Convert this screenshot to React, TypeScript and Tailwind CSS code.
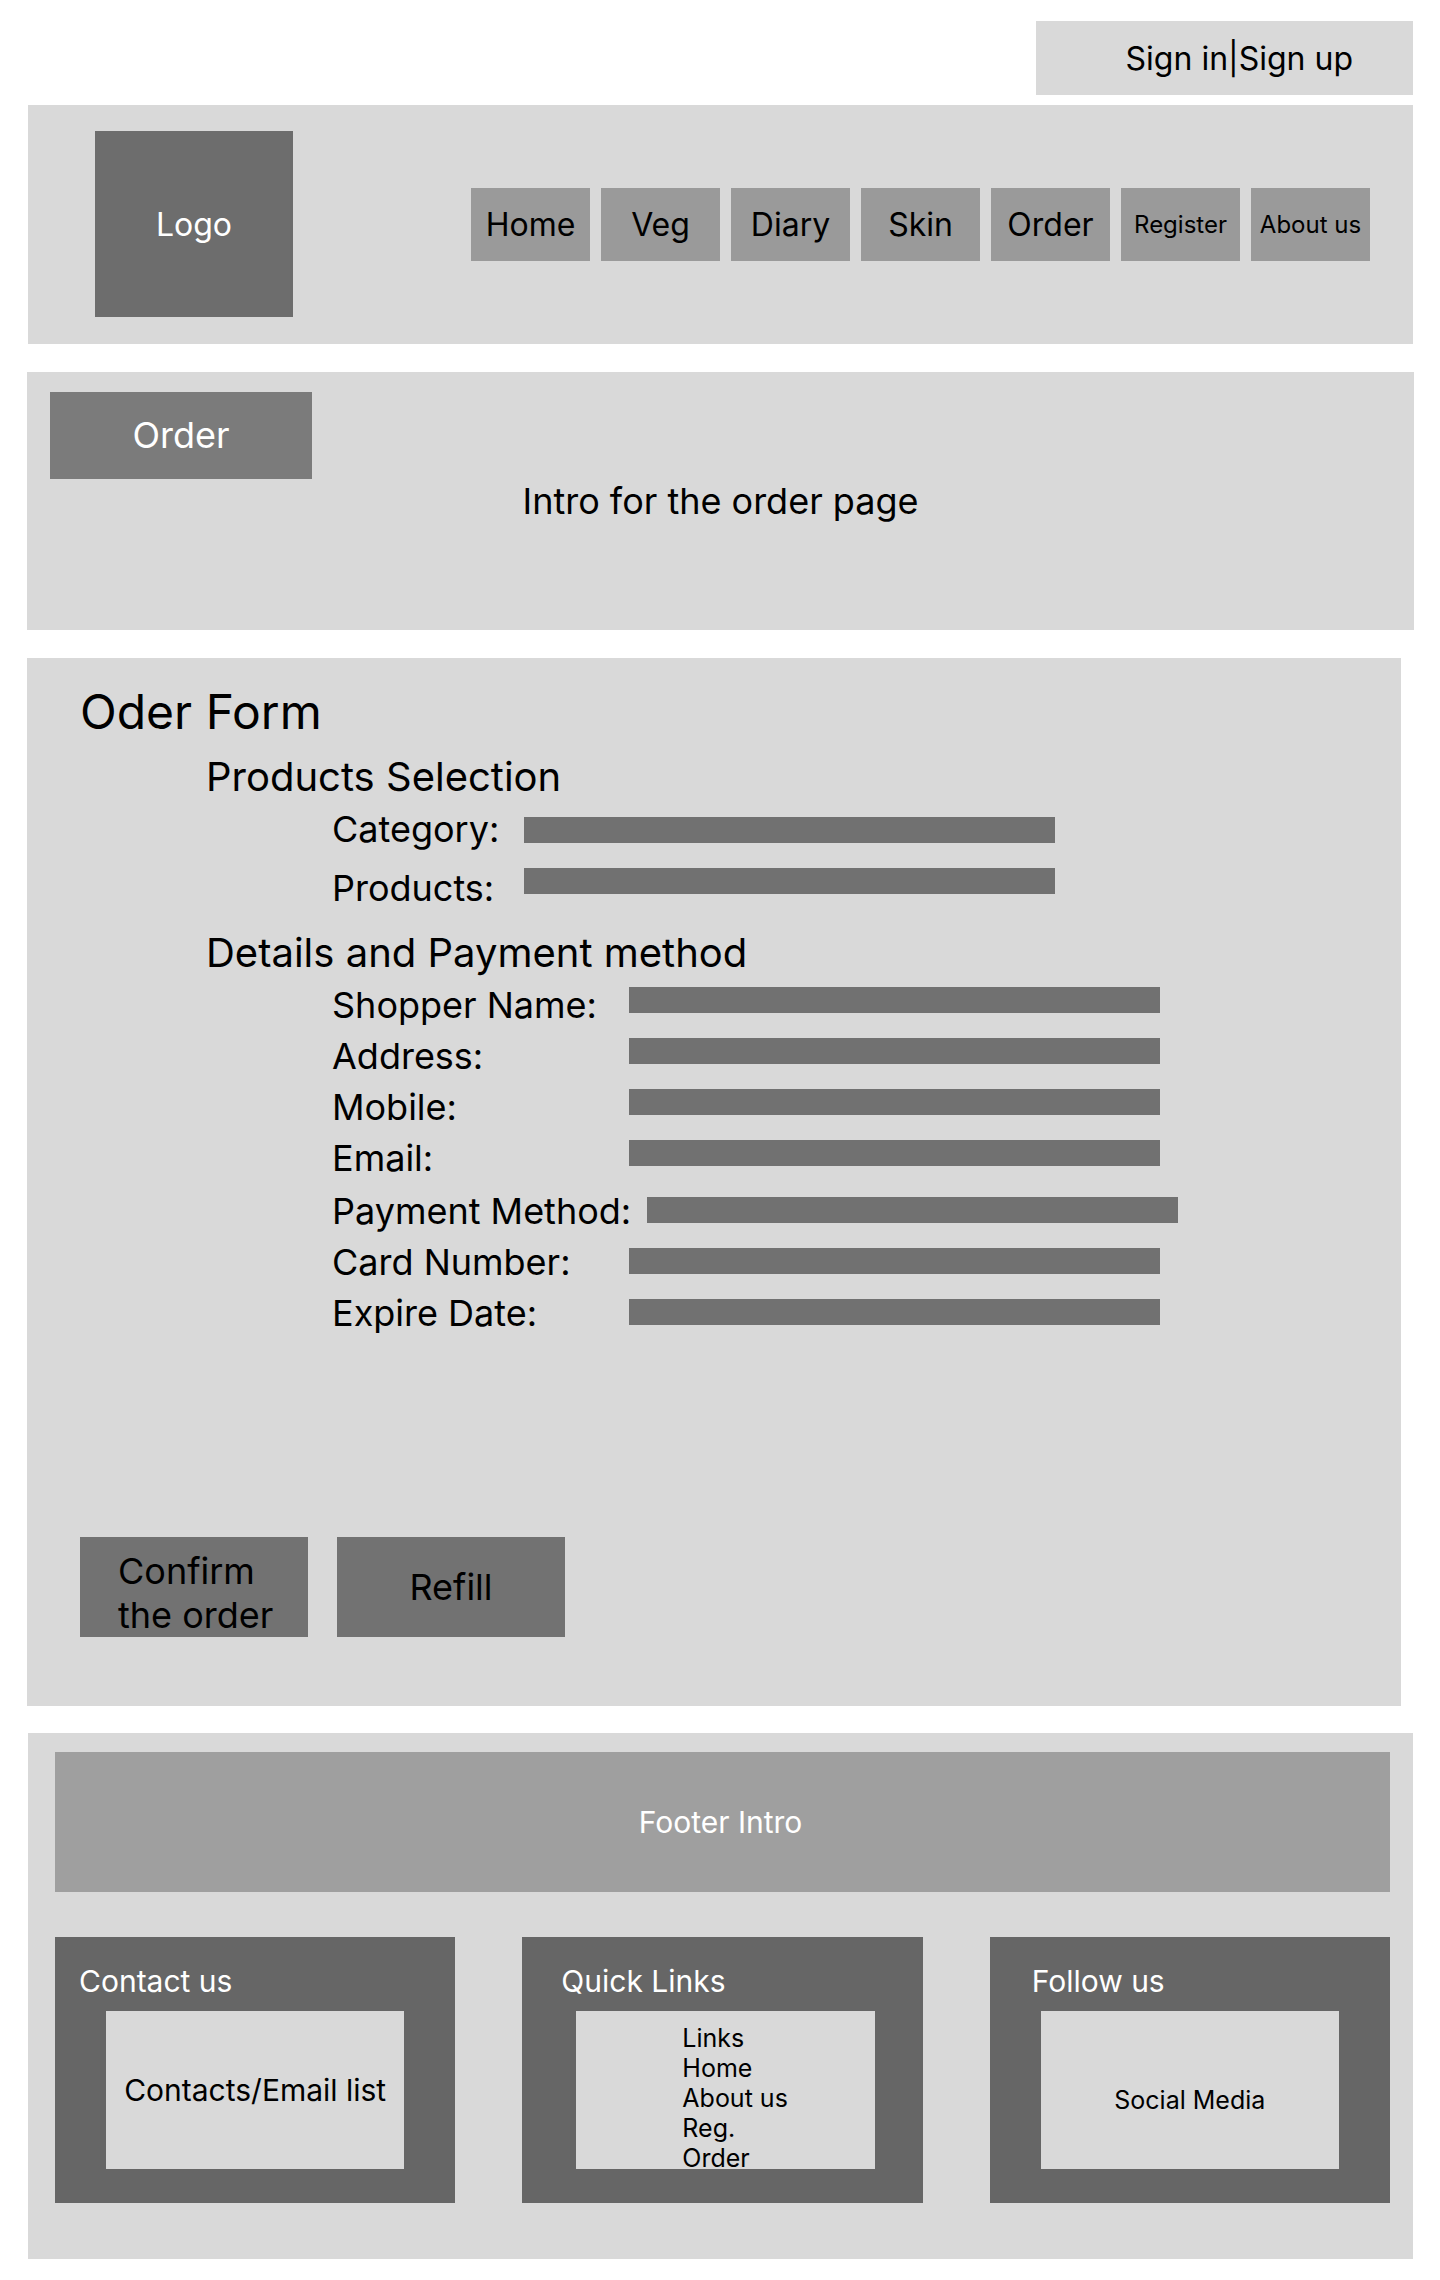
import type { ReactNode } from "react";

type Field = { id: string; label: string; type?: string };

const navItems = [
  { label: "Home", size: "text-[32px] leading-[39px]" },
  { label: "Veg", size: "text-[32px] leading-[39px]" },
  { label: "Diary", size: "text-[32px] leading-[39px]" },
  { label: "Skin", size: "text-[32px] leading-[39px]" },
  { label: "Order", size: "text-[32px] leading-[39px]" },
  { label: "Register", size: "text-[24px] leading-[29px]" },
  { label: "About us", size: "text-[24px] leading-[29px]" },
];

const productFields: Field[] = [
  { id: "category", label: "Category:" },
  { id: "products", label: "Products:" },
];

const shopperFields: Field[] = [
  { id: "shopper-name", label: "Shopper Name:" },
  { id: "address", label: "Address:" },
  { id: "mobile", label: "Mobile:", type: "tel" },
  { id: "email", label: "Email:", type: "email" },
];

const paymentFields: Field[] = [
  { id: "payment-method", label: "Payment Method:" },
  { id: "card-number", label: "Card Number:" },
  { id: "expire-date", label: "Expire Date:" },
];

const quickLinks = ["Links", "Home", "About us", "Reg.", "Order"];

function FieldInput({ id, type = "text" }: { id: string; type?: string }) {
  return (
    <input
      id={id}
      name={id}
      type={type}
      className="block h-[26px] w-[531px] min-w-0 bg-[#717171] px-2 text-base text-white"
    />
  );
}

function FieldRow({ field, inputClass }: { field: Field; inputClass: string }) {
  return (
    <div className="flex items-start gap-4">
      <label htmlFor={field.id} className="min-w-[281px] whitespace-nowrap text-4xl leading-[51px]">
        {field.label}
      </label>
      <div className={inputClass}>
        <FieldInput id={field.id} type={field.type} />
      </div>
    </div>
  );
}

function FooterCard({
  title,
  titleClass,
  bodyClass,
  children,
}: {
  title: string;
  titleClass: string;
  bodyClass: string;
  children: ReactNode;
}) {
  return (
    <section className="bg-[#666666] pt-[26px] pb-[34px] text-white">
      <h2 className={`text-[30px] leading-9 ${titleClass}`}>{title}</h2>
      <div className={`mt-3 flex h-[158px] bg-[#d9d9d9] text-black ${bodyClass}`}>{children}</div>
    </section>
  );
}

export default function App() {
  return (
    <div className="bg-white pt-[21px] pb-[21px] font-['Inter',sans-serif] text-black">
      <div className="mr-[27px] ml-auto flex h-[74px] w-[377px] items-center justify-end bg-[#d9d9d9] pr-[60px] text-[32px] leading-[39px]">
        <a href="#sign-in">Sign in</a>
        <span>|</span>
        <a href="#sign-up">Sign up</a>
      </div>

      <header className="mt-2.5 mr-[27px] ml-7 flex items-center justify-between bg-[#d9d9d9] pt-[26px] pr-[43px] pb-[27px] pl-[67px]">
        <a
          href="#home"
          className="flex h-[186px] w-[198px] items-center justify-center bg-[#6d6d6d] text-[32px] leading-[39px] text-white"
        >
          Logo
        </a>
        <nav className="flex gap-[11px]">
          {navItems.map((item) => (
            <a
              key={item.label}
              href="#"
              className={`flex h-[73px] w-[119px] items-center justify-center whitespace-nowrap bg-[#9a9a9a] ${item.size}`}
            >
              {item.label}
            </a>
          ))}
        </nav>
      </header>

      <main>
        <section className="mt-7 mr-[26px] ml-[27px] bg-[#d9d9d9] px-[23px] pt-5 pb-[107px]">
          <h1 className="flex h-[87px] w-[262px] items-center justify-center bg-[#7b7b7b] pb-0.5 text-4xl leading-[44px] text-white">
            Order
          </h1>
          <p className="text-center text-4xl leading-[44px]">Intro for the order page</p>
        </section>

        <form className="mt-7 mr-[39px] ml-[27px] bg-[#d9d9d9] pt-[25px] pb-[69px] pl-[53px]">
          <h2 className="text-5xl leading-[58px]">Oder Form</h2>

          <fieldset className="mt-3 pl-[126px]">
            <legend className="text-[40px] leading-[48px]">Products Selection</legend>
            <div className="mt-1.5 flex gap-4 pl-[126px]">
              <div className="flex min-w-[176px] flex-col gap-[15px]">
                {productFields.map((field) => (
                  <label key={field.id} htmlFor={field.id} className="text-4xl leading-[44px]">
                    {field.label}
                  </label>
                ))}
              </div>
              <div className="flex flex-col gap-[25px] pt-2.5">
                {productFields.map((field) => (
                  <FieldInput key={field.id} id={field.id} />
                ))}
              </div>
            </div>
          </fieldset>

          <fieldset className="mt-[19px] pl-[126px]">
            <legend className="text-[40px] leading-[48px]">Details and Payment method</legend>
            <div className="mt-[3px] flex flex-col gap-0.5 pl-[126px]">
              <div>
                {shopperFields.map((field) => (
                  <FieldRow key={field.id} field={field} inputClass="pt-[7px]" />
                ))}
              </div>
              <div>
                {paymentFields.map((field) => (
                  <FieldRow key={field.id} field={field} inputClass="pt-[11px]" />
                ))}
              </div>
            </div>
          </fieldset>

          <div className="mt-[198px] flex gap-[29px] text-4xl leading-[44px]">
            <button
              type="submit"
              className="h-[100px] w-[228px] bg-[#727272] pt-3 pl-[38px] text-left"
            >
              Confirm
              <br />
              the order
            </button>
            <button type="reset" className="h-[100px] w-[228px] bg-[#727272]">
              Refill
            </button>
          </div>
        </form>
      </main>

      <footer className="mt-[27px] mr-[27px] ml-7 bg-[#d9d9d9] pt-[19px] pr-[23px] pb-14 pl-[27px]">
        <p className="flex h-[140px] items-center justify-center bg-[#9f9f9f] pr-1 text-[30px] leading-9 text-white">
          Footer Intro
        </p>
        <div className="mt-[45px] grid grid-cols-3 gap-[67px]">
          <FooterCard
            title="Contact us"
            titleClass="pl-6"
            bodyClass="mx-[51px] items-center justify-center text-[30px] leading-9"
          >
            <a href="#contacts" className="whitespace-nowrap">
              Contacts/Email list
            </a>
          </FooterCard>
          <FooterCard
            title="Quick Links"
            titleClass="pl-[39px]"
            bodyClass="mr-12 ml-[54px] pt-3 pl-[106px] text-[25px] leading-[30px]"
          >
            <ul>
              {quickLinks.map((link) => (
                <li key={link}>
                  <a href="#">{link}</a>
                </li>
              ))}
            </ul>
          </FooterCard>
          <FooterCard
            title="Follow us"
            titleClass="pl-[42px]"
            bodyClass="mx-[51px] items-center justify-center pt-5 text-[25px] leading-[30px]"
          >
            <a href="#social">Social Media</a>
          </FooterCard>
        </div>
      </footer>
    </div>
  );
}
